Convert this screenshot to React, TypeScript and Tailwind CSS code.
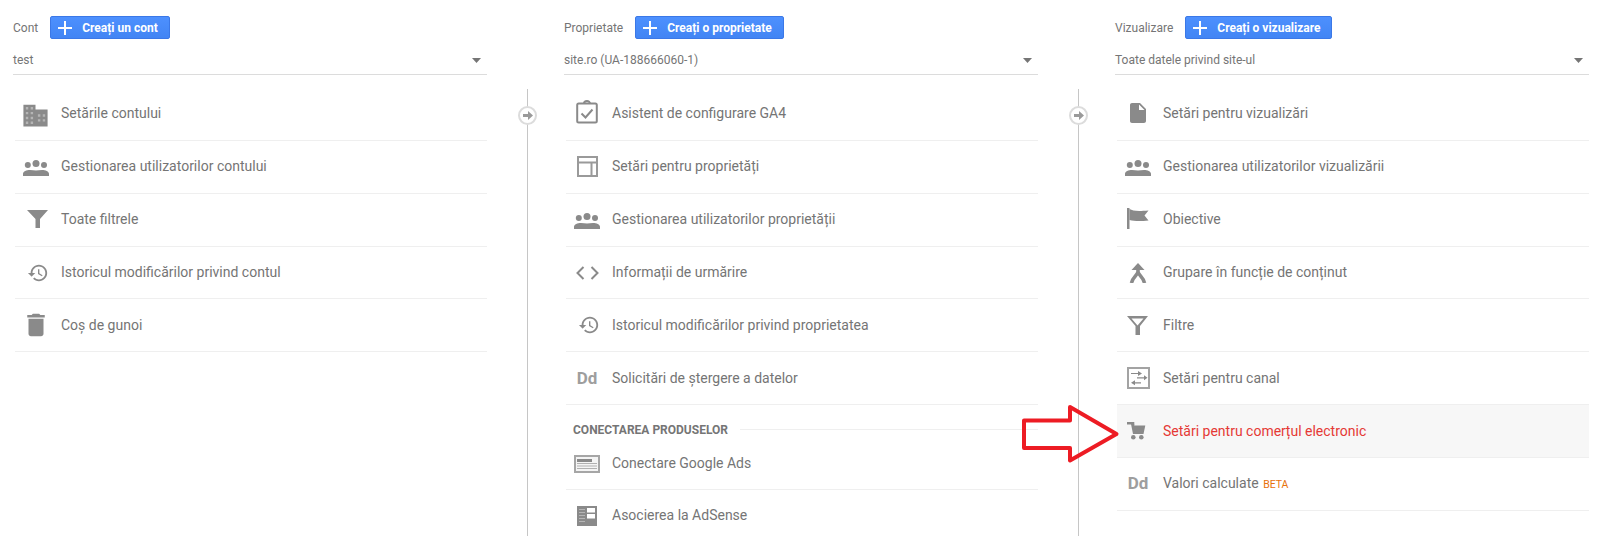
import type { ReactNode } from 'react'

const ICON = '#8a8a8a'

function PlusIcon() {
  return (
    <svg width="14" height="14" viewBox="0 0 14 14" className="shrink-0">
      <rect x="6" y="0" width="2" height="14" fill="#fff" />
      <rect x="0" y="6" width="14" height="2" fill="#fff" />
    </svg>
  )
}

function Domain() {
  return (
    <svg width="29" height="29" viewBox="0 0 24 24" className="mt-[4px] -ml-[1px]" fill={ICON}>
      <path d="M12 7V3H2v18h20V7H12z" />
      <path
        fill="#b5b5b5"
        d="M4 5h2v2H4zM8 5h2v2H8zM4 9h2v2H4zM8 9h2v2H8zM4 13h2v2H4zM8 13h2v2H8zM4 17h2v2H4zM8 17h2v2H8zM14 11h2v2h-2zM18 11h2v2h-2zM14 15h2v2h-2zM18 15h2v2h-2z"
      />
    </svg>
  )
}

function People() {
  return (
    <svg width="26" height="16" viewBox="0 0 26 16" fill={ICON} className="mt-[2px]">
      <circle cx="13" cy="3.5" r="3.5" />
      <circle cx="4.8" cy="5" r="3" />
      <circle cx="21" cy="5" r="3" />
      <path d="M0 16v-2.2C0 11.500 3.500 10 7 10c2 0 4.200.4 6 .4s4-.4 6-.4c3.500 0 7 1.500 7 3.800V16z" />
    </svg>
  )
}

function FilterSolid() {
  return (
    <svg width="21" height="18" viewBox="0 0 21 18" fill={ICON} className="-mt-[2px] ml-[3px]">
      <path d="M0 0h21l-8 9v9H8.500V9z" />
    </svg>
  )
}

function FilterHollow() {
  return (
    <svg width="21" height="19" viewBox="0 0 21 19" fill={ICON} className="mt-[1px] -ml-[2px]">
      <path fillRule="evenodd" d="M0 0h21l-8 10v9H8.500v-9zM4.500 2.500l6 7 6-7z" />
    </svg>
  )
}

function History() {
  return (
    <svg width="22" height="22" viewBox="0 0 24 24" fill={ICON} className="ml-[3px]">
      <path d="M13 3c-4.970 0-9 4.030-9 9H1l3.890 3.890.07.140L9 12H6c0-3.870 3.130-7 7-7s7 3.130 7 7-3.130 7-7 7c-1.930 0-3.680-.79-4.940-2.060l-1.420 1.420C8.270 19.990 10.510 21 13 21c4.970 0 9-4.030 9-9s-4.030-9-9-9zm-1 5v5l4.280 2.540.72-1.210-3.500-2.080V8H12z" />
    </svg>
  )
}

function Trash() {
  return (
    <svg width="30" height="30" viewBox="0 0 24 24" fill={ICON}>
      <path d="M6 19c0 1.100.9 2 2 2h8c1.100 0 2-.9 2-2V7H6v12zM19 4h-3.500l-1-1h-5l-1 1H5v2h14V4z" />
    </svg>
  )
}

function Clipboard() {
  return (
    <svg width="22" height="24" viewBox="0 0 22 24" fill="none" stroke={ICON} className="-mt-[3px]">
      <rect x="1.200" y="3.500" width="19.600" height="19" rx="1.500" strokeWidth="2" />
      <path d="M8 3.500a3 2.500 0 0 1 6 0" strokeWidth="2" />
      <path d="M5.500 13.500l4 4 7-8" strokeWidth="2" />
    </svg>
  )
}

function Layout() {
  return (
    <svg width="21" height="21" viewBox="0 0 21 21" fill="none" stroke="#9a9a9a" strokeWidth="2">
      <rect x="1" y="1" width="19" height="19" />
      <path d="M1 6.500h19M14.500 6.500V20" />
    </svg>
  )
}

function Code() {
  return (
    <svg width="23" height="14" viewBox="0 0 23 14" fill="none" stroke={ICON} strokeWidth="2">
      <path d="M7.500 1L1.500 7l6 6M15.500 1l6 6-6 6" />
    </svg>
  )
}

function Dd() {
  return <span className="text-[17px] leading-none font-bold text-[#9e9e9e]">Dd</span>
}

function AdsIcon() {
  return (
    <svg width="26" height="18" viewBox="0 0 26 18" className="mt-[2px]">
      <rect x="1" y="1" width="24" height="16" fill="#f4f4f4" stroke="#a6a6a6" strokeWidth="2" />
      <rect x="3" y="4" width="15" height="3" fill="#8a8a8a" />
      <path d="M3 8.500h20M3 11h20M3 13.500h20" stroke="#b0b0b0" strokeWidth="1" />
    </svg>
  )
}

function AdSense() {
  return (
    <svg width="20" height="20" viewBox="0 0 20 20" className="mt-[1px]">
      <rect width="20" height="20" fill="#8a8a8a" />
      <rect x="10" y="2" width="8" height="4.500" fill="#fff" />
      <rect x="10" y="8" width="8" height="4.500" fill="#fff" />
      <path d="M2 3.500h6M2 6.500h6M2 9.500h6M2 12.500h6M2 15.500h6" stroke="#b5b5b5" strokeWidth="1" />
    </svg>
  )
}

function FileIcon() {
  return (
    <svg width="24" height="24" viewBox="0 0 24 24" fill={ICON} className="-mt-[1px]">
      <path d="M6 2c-1.100 0-1.990.9-1.990 2L4 20c0 1.100.89 2 1.990 2H18c1.100 0 2-.9 2-2V8l-6-6H6zm7 7V3.500L18.500 9H13z" />
    </svg>
  )
}

function Flag() {
  return (
    <svg width="22" height="21" viewBox="0 0 22 21" fill={ICON} className="-mt-[3px]">
      <path d="M0 0h2.500v21H0z" />
      <path d="M2.500 1C6 3 10 3.500 21.500 2.500L17.500 7.500l4 5C12 13.500 7 13 2.500 12z" />
    </svg>
  )
}

function Merge() {
  return (
    <svg width="18" height="20" viewBox="0 0 18 20" fill="none" stroke={ICON} strokeWidth="3.600" className="-ml-[1px]">
      <path d="M9 0l6.500 7h-13z" fill={ICON} stroke="none" />
      <path d="M9 6v2.500C9 12 3.500 14 2.500 20M9 8.500C9 12 14.500 14 15.500 20" />
    </svg>
  )
}

function Channel() {
  return (
    <svg width="23" height="22" viewBox="0 0 23 22" fill="none" className="-mt-[1px]">
      <rect x="1" y="1" width="21" height="20" stroke="#a3a3a3" strokeWidth="2" />
      <path d="M4 6.500h8M10 10.800h8M7 15.800h7" stroke={ICON} strokeWidth="1.200" />
      <path d="M11 4l4 2.500-4 2.500zM17 8.300l3.500 2.500-3.500 2.500zM8 13.300l-4 2.500 4 2.500z" fill={ICON} />
    </svg>
  )
}

function Cart() {
  return (
    <svg width="19" height="18" viewBox="0 0 19 18" fill={ICON} className="-mt-[1px] -ml-[3px]">
      <path d="M0 0h7.300v2.500H0z" />
      <path d="M4 2h3.300v1.500h11L16.500 12H6z" />
      <circle cx="6.300" cy="15.300" r="2.300" />
      <circle cx="14.300" cy="15.300" r="2.300" />
    </svg>
  )
}

function AddButton({ label }: { label: string }) {
  return (
    <button className="flex h-[23px] items-center gap-[10px] rounded-[2px] border border-[#3b78e7] bg-gradient-to-b from-[#4d90fe] to-[#4285f4] pr-[11px] pl-[7px] text-[12px] font-bold text-white">
      <PlusIcon />
      {label}
    </button>
  )
}

function Row({ icon, children, active }: { icon: ReactNode; children: ReactNode; active?: boolean }) {
  return (
    <div
      className={`flex h-[52.86px] items-center border-b border-[#efefef] text-[14px] ${
        active ? 'bg-[#f7f7f7] text-[#e53935]' : 'text-[#757575]'
      }`}
    >
      <span className="mr-[4px] flex w-[42px] shrink-0 items-center justify-center">{icon}</span>
      <span>{children}</span>
    </div>
  )
}

function Connector() {
  return (
    <div className="relative mt-px ml-[40px] w-px shrink-0 bg-[#c6c6c6]">
      <div className="absolute top-[17px] -left-[9px] flex h-[19px] w-[19px] items-center justify-center rounded-full border-2 border-[#dcdcdc] bg-white">
        <svg width="10" height="9" viewBox="0 0 10 9" fill="#9a9a9a">
          <path d="M0 3h5V0l5 4.500L5 9V6H0z" />
        </svg>
      </div>
    </div>
  )
}

function Column({
  title,
  button,
  value,
  children,
  last,
}: {
  title: string
  button: string
  value: string
  children: ReactNode
  last?: boolean
}) {
  return (
    <section className={`flex shrink-0 flex-col pt-[16px] ${last ? 'w-[474px]' : 'w-[551px]'}`}>
      <div className="flex w-[474px] items-center gap-[12px]">
        <span className="text-[12px] text-[#757575]">{title}</span>
        <AddButton label={button} />
      </div>
      <div className="flex h-[36px] w-[474px] items-center justify-between border-b border-[#dcdcdc] pt-[7px] pr-[6px] text-[12px] text-[#757575]">
        <span>{value}</span>
        <svg width="9" height="5" viewBox="0 0 9 5" fill="#757575" className="mt-[1px]">
          <path d="M0 0h9L4.500 5z" />
        </svg>
      </div>
      <div className="mt-[13px] flex min-h-0 flex-1">
        <div className="w-[474px] shrink-0 pl-[2px]">{children}</div>
        {!last && <Connector />}
      </div>
    </section>
  )
}

export default function App() {
  return (
    <div className="relative flex h-[536px] w-[1603px] overflow-hidden bg-white pl-[13px] font-['Roboto',sans-serif]">
      <Column title="Cont" button="Creați un cont" value="test">
        <Row icon={<Domain />}>Setările contului</Row>
        <Row icon={<People />}>Gestionarea utilizatorilor contului</Row>
        <Row icon={<FilterSolid />}>Toate filtrele</Row>
        <Row icon={<History />}>Istoricul modificărilor privind contul</Row>
        <Row icon={<Trash />}>Coș de gunoi</Row>
      </Column>

      <Column title="Proprietate" button="Creați o proprietate" value="site.ro (UA-188666060-1)">
        <Row icon={<Clipboard />}>Asistent de configurare GA4</Row>
        <Row icon={<Layout />}>Setări pentru proprietăți</Row>
        <Row icon={<People />}>Gestionarea utilizatorilor proprietății</Row>
        <Row icon={<Code />}>Informații de urmărire</Row>
        <Row icon={<History />}>Istoricul modificărilor privind proprietatea</Row>
        <Row icon={<Dd />}>Solicitări de ștergere a datelor</Row>
        <div className="flex h-[32px] items-center gap-[12px] pt-[17px] pl-[7px]">
          <span className="text-[12px] font-bold text-[#757575] uppercase">Conectarea produselor</span>
          <span className="h-px flex-1 bg-[#efefef]" />
        </div>
        <Row icon={<AdsIcon />}>Conectare Google Ads</Row>
        <Row icon={<AdSense />}>Asocierea la AdSense</Row>
      </Column>

      <Column title="Vizualizare" button="Creați o vizualizare" value="Toate datele privind site-ul" last>
        <Row icon={<FileIcon />}>Setări pentru vizualizări</Row>
        <Row icon={<People />}>Gestionarea utilizatorilor vizualizării</Row>
        <Row icon={<Flag />}>Obiective</Row>
        <Row icon={<Merge />}>Grupare în funcție de conținut</Row>
        <Row icon={<FilterHollow />}>Filtre</Row>
        <Row icon={<Channel />}>Setări pentru canal</Row>
        <Row icon={<Cart />} active>
          Setări pentru comerțul electronic
        </Row>
        <Row icon={<Dd />}>
          Valori calculate <span className="ml-px text-[10.5px] text-[#e8710a]">BETA</span>
        </Row>
      </Column>

      {/* red annotation arrow drawn over the screenshot */}
      <svg
        width="100"
        height="60"
        viewBox="0 0 100 60"
        fill="none"
        className="absolute top-[404px] left-[1021px]"
      >
        <path d="M3 16.500H49V3L95.500 30 49 56.500V44H3z" stroke="#ed1c24" strokeWidth="4" strokeLinejoin="round" />
      </svg>
    </div>
  )
}
